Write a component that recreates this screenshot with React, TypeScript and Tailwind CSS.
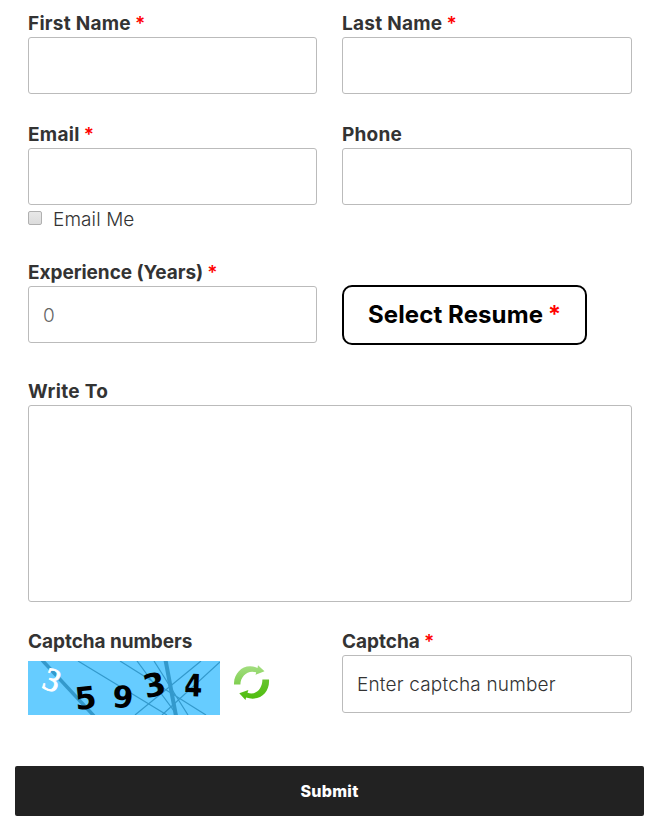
import type { ReactNode } from "react";

const inputClass =
  "block w-full rounded-[3px] border border-[#bbb] bg-white px-[14px] text-[19px] font-light outline-none placeholder:opacity-100";

function Label({ children, required, className = "" }: { children: ReactNode; required?: boolean; className?: string }) {
  return (
    <label className="flex h-[28px] items-center gap-[4px] whitespace-nowrap pt-[2px] text-[19px] font-bold text-[#333]">
      <span className={className}>{children}</span>
      {required && <span className="font-semibold text-[#f00]">*</span>}
    </label>
  );
}

function CaptchaImage() {
  return (
    <svg width="192" height="54" viewBox="0 0 192 54" className="block bg-[#66ccff]">
      <g stroke="#3399cc" fill="none">
        <path d="M14 -1L66 55" strokeWidth="3.5" />
        <path d="M50 0L139 54M92 0L178 54M107 54L173 0M109 0L149 54M126 0L160 54M192 1L134 54" strokeWidth="1.2" />
        <path d="M137.5 -1L148 55" strokeWidth="4" />
      </g>
      <text transform="translate(12.5 26.5) rotate(20)" fontSize="33" fill="#fff" stroke="#fff" strokeWidth="0.8" className="font-['Liberation_Serif',serif]">3</text>
      <g fill="#000" fontWeight="700" className="font-['DejaVu_Sans',sans-serif]">
        <text transform="translate(48 49) rotate(-6)" fontSize="31">5</text>
        <text transform="translate(84 46) rotate(3)" fontSize="30">9</text>
        <text transform="translate(118 37.5) rotate(-13)" fontSize="32">3</text>
        <text transform="translate(156 35) rotate(2)" fontSize="31" textLength="18" lengthAdjust="spacingAndGlyphs">4</text>
      </g>
    </svg>
  );
}

function RefreshIcon() {
  return (
    <svg width="36" height="36" viewBox="0 0 36 36" className="block">
      <defs>
        <linearGradient id="lightGreen" x1="0" y1="0" x2="0" y2="1">
          <stop offset="0" stopColor="#a4de82" />
          <stop offset="1" stopColor="#80cf50" />
        </linearGradient>
        <linearGradient id="deepGreen" x1="0" y1="0" x2="0" y2="1">
          <stop offset="0" stopColor="#66c42e" />
          <stop offset="1" stopColor="#4fbd0e" />
        </linearGradient>
      </defs>
      <path d="M0 19.5C-.5 7 11-3 23.5 3L24 .3L30.5 6.3L21.5 9.8L22.2 7.4C14 4.5 6.5 11 6.4 19.5Z" fill="url(#lightGreen)" />
      <path d="M35 14.5C36 27.5 25.5 37 12 32.5L11.5 35L5.3 28.2L14.4 25L13.5 27.8C22 30.5 28.4 23.8 28.4 14.5Z" fill="url(#deepGreen)" />
    </svg>
  );
}

export default function App() {
  return (
    <form className="h-[829px] w-[659px] bg-white pt-[9px] font-['Inter','Liberation_Sans',sans-serif]">
      <div className="grid grid-cols-[289px_290px] gap-x-[25px] pl-[28px]">
        <div className="h-[111px]">
          <Label required className="tracking-[0.26px]">First Name</Label>
          <input className={`${inputClass} h-[57px]`} />
        </div>
        <div className="h-[111px]">
          <Label required className="tracking-[0.26px]">Last Name</Label>
          <input className={`${inputClass} h-[57px]`} />
        </div>
        <div className="h-[138px]">
          <Label required className="tracking-[0.3px]">Email</Label>
          <input className={`${inputClass} h-[57px]`} />
          <div className="flex h-[28px] items-center gap-[11px]">
            <input
              type="checkbox"
              className="mb-[2px] h-[14px] w-[14px] appearance-none rounded-[2px] border border-[#b0b0b0] bg-linear-to-b from-[#e8e8e8] to-[#dcdcdc]"
            />
            <span className="pt-[2px] text-[19px] font-light tracking-[0.1px] text-[#333]">Email Me</span>
          </div>
        </div>
        <div className="h-[138px]">
          <Label className="tracking-[0.2px]">Phone</Label>
          <input className={`${inputClass} h-[57px]`} />
        </div>
        <div className="h-[119px]">
          <Label required className="tracking-[-0.05px]">Experience (Years)</Label>
          <input className={`${inputClass} h-[57px] pt-[2px] placeholder:text-[#666]`} placeholder="0" />
        </div>
        <div className="h-[119px] pt-[27px]">
          <button type="button" className="flex h-[60px] w-[245px] items-center justify-center gap-[5px] rounded-[10px] border-2 border-black bg-white text-[24px] font-bold text-black">
            <span className="tracking-[0.1px]">Select Resume</span>
            <span className="font-semibold text-[#f00]">*</span>
          </button>
        </div>
        <div className="col-span-2 h-[250px]">
          <Label className="tracking-[0.35px]">Write To</Label>
          <textarea className="block h-[197px] w-full resize-none rounded-[3px] border border-[#bbb] bg-white outline-none" />
        </div>
        <div className="h-[139px]">
          <Label className="tracking-[-0.05px]">Captcha numbers</Label>
          <div className="mt-[6px] flex items-start gap-[14px]">
            <CaptchaImage />
            <div className="pt-[4px]"><RefreshIcon /></div>
          </div>
        </div>
        <div className="h-[139px]">
          <Label required>Captcha</Label>
          <input className={`${inputClass} h-[58px] tracking-[0.18px] placeholder:text-[#333]`} placeholder="Enter captcha number" />
        </div>
      </div>
      <button type="submit" className="ml-[15px] block h-[50px] w-[629px] rounded-[2px] bg-[#222] text-[16px] font-extrabold tracking-[0.3px] text-white">
        Submit
      </button>
    </form>
  );
}
